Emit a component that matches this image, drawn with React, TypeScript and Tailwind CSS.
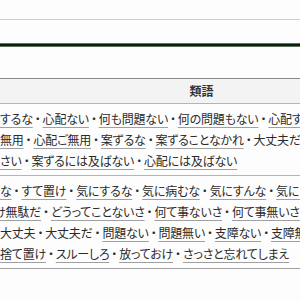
type Item = [string, boolean];
type Row = { items: Item[]; shift?: boolean };

const cell1: Row[] = [
  { items: [["するな", true], ["心配ない", true], ["何も問題ない", true], ["何の問題もない", true], ["心配するな", true]] },
  { items: [["無用", true], ["心配ご無用", true], ["案ずるな", true], ["案ずることなかれ", true], ["大丈夫だ", false], ["大丈夫", false]] },
  { items: [["さい", true], ["案ずるには及ばない", true], ["心配には及ばない", true]] },
];

const cell2: Row[] = [
  { items: [["な", true], ["すて置け", true], ["気にするな", true], ["気に病むな", true], ["気にすんな", true], ["気にしない", true]] },
  { items: [["け無駄だ", true], ["どうってことないさ", true], ["何て事ないさ", true], ["何て事無いさ", true]], shift: true },
  { items: [["大丈夫", false], ["大丈夫だ", false], ["問題ない", true], ["問題無い", true], ["支障ない", true], ["支障無い", true]] },
  { items: [["捨て置け", true], ["スルーしろ", true], ["放っておけ", true], ["さっさと忘れてしまえ", true]] },
];

function Line({ row }: { row: Row }) {
  return (
    <div
      className={
        "h-[21px] leading-[21px] whitespace-nowrap tracking-[-0.2px] [font-feature-settings:'palt'] " +
        (row.shift ? "-ml-[6px]" : "")
      }
    >
      {row.items.map(([text, link], i) => (
        <span key={i}>
          {i > 0 && <span className="px-[2px]">・</span>}
          {link ? (
            <a className="underline decoration-[#a0a0a0] underline-offset-[3px]">{text}</a>
          ) : (
            <span>{text}</span>
          )}
        </span>
      ))}
    </div>
  );
}

export default function App() {
  return (
    <div className="w-[300px] h-[300px] overflow-hidden bg-[#fdfdfd] text-[12px] text-[#2a2a2a] font-['Noto_Sans_CJK_JP','Noto_Sans',sans-serif]">
      <div className="h-[19px]" />
      <div className="h-px bg-[#cfcfcf]" />
      <div className="h-[23px]" />
      <div className="h-px bg-[#5a755a]" />
      <div className="h-[2px] bg-[#0e1e0e]" />
      <div className="h-px bg-[#5a755a]" />
      <div className="h-[31px]" />
      <div className="w-[403px] border-t border-[#8a8a8a]">
        <div className="h-[25px] bg-[#f3f3f3] border-b border-[#b4b4b4] flex items-center justify-center font-bold text-[#333]">
          類語
        </div>
        <div className="py-1 border-b border-[#b4b4b4]">
          {cell1.map((r, i) => (
            <Line key={i} row={r} />
          ))}
        </div>
        <div className="py-1 border-b border-[#a0a0a0]">
          {cell2.map((r, i) => (
            <Line key={i} row={r} />
          ))}
        </div>
      </div>
    </div>
  );
}
